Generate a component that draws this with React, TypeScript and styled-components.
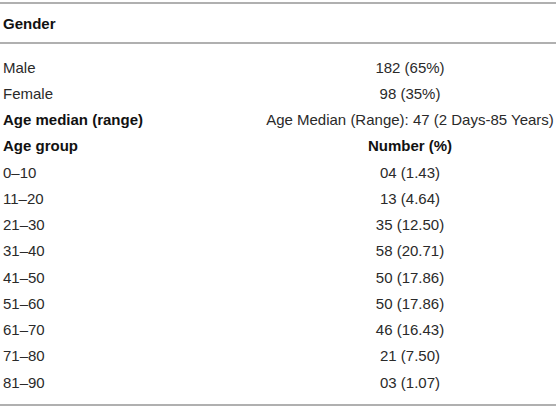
import React from "react";
import styled, { createGlobalStyle } from "styled-components";

const Global = createGlobalStyle`
  html, body { margin: 0; padding: 0; background: #fff; }
  body { font-family: "Liberation Sans", Arial, sans-serif; }
`;

const Table = styled.div`
  width: 556px;
  margin-top: 2px;
  border-top: 2px solid #b0b0b0;
  border-bottom: 2px solid #b0b0b0;
  color: #2a2a2a;
  font-size: 15px;
`;

const Head = styled.div`
  height: 38px;
  display: flex;
  align-items: center;
  padding-left: 3px;
  border-bottom: 2px solid #b0b0b0;
  font-weight: bold;
  color: #111;
`;

const Body = styled.div`
  padding: 10px 0 9px;
`;

const Row = styled.div`
  display: grid;
  grid-template-columns: 264px 1fr;
  height: 26.25px;
  align-items: center;
`;

const Label = styled.div<{ $bold?: boolean }>`
  padding-left: 3px;
  font-weight: ${(p) => (p.$bold ? "bold" : "normal")};
  color: ${(p) => (p.$bold ? "#111" : "#2a2a2a")};
`;

const Value = styled.div<{ $bold?: boolean }>`
  text-align: center;
  font-weight: ${(p) => (p.$bold ? "bold" : "normal")};
  color: ${(p) => (p.$bold ? "#111" : "#2a2a2a")};
`;

const rows: { label: string; value: string; bl?: boolean; bv?: boolean }[] = [
  { label: "Male", value: "182 (65%)" },
  { label: "Female", value: "98 (35%)" },
  { label: "Age median (range)", value: "Age Median (Range): 47 (2 Days-85 Years)", bl: true },
  { label: "Age group", value: "Number (%)", bl: true, bv: true },
  { label: "0–10", value: "04 (1.43)" },
  { label: "11–20", value: "13 (4.64)" },
  { label: "21–30", value: "35 (12.50)" },
  { label: "31–40", value: "58 (20.71)" },
  { label: "41–50", value: "50 (17.86)" },
  { label: "51–60", value: "50 (17.86)" },
  { label: "61–70", value: "46 (16.43)" },
  { label: "71–80", value: "21 (7.50)" },
  { label: "81–90", value: "03 (1.07)" },
];

export default function App() {
  return (
    <>
      <Global />
      <Table>
        <Head>Gender</Head>
        <Body>
          {rows.map((r) => (
            <Row key={r.label}>
              <Label $bold={r.bl}>{r.label}</Label>
              <Value $bold={r.bv}>{r.value}</Value>
            </Row>
          ))}
        </Body>
      </Table>
    </>
  );
}
